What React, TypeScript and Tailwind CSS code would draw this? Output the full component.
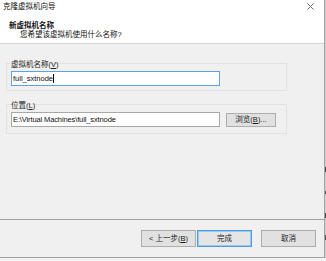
import React from 'react';

const font = "font-['Liberation_Sans','Noto_Sans_CJK_SC',sans-serif]";

const Btn = ({ children, primary }: { children: React.ReactNode; primary?: boolean }) => (
  <div
    className={`w-[55px] h-[17px] flex items-center justify-center text-[7.5px] leading-[9px] text-[#1a1a1a] ${
      primary ? 'bg-[#e5e5e5] border border-[#4d9be2] shadow-[inset_0_0_0_1px_#9cc6ee]' : 'bg-[#e1e1e1] border border-[#adadad]'
    }`}
  >
    {children}
  </div>
);

const App = () => {
  return (
    <div className={`w-[326px] h-[261px] bg-[#f4f4f4] flex overflow-hidden ${font}`}>
      <div className="w-[325px] h-[258px] flex flex-col border-r border-b border-[#a3a3a3] bg-[#f0f0f0]">
        {/* header */}
        <div className="h-[44px] shrink-0 bg-white border-b border-[#d4d4d4] px-[3px] text-[7.5px] text-[#111]">
          <div className="h-[13px] flex items-center justify-between">
            <span className="leading-[13px]">克隆虚拟机向导</span>
            <svg width="7" height="7" viewBox="0 0 7 7" className="mr-[7px]">
              <path d="M0.5 0.5 L6.5 6.5 M6.5 0.5 L0.5 6.5" stroke="#6b6b6b" strokeWidth="1" />
            </svg>
          </div>
          <div className="mt-[7.5px] ml-[6px] font-bold leading-[9px]">新虚拟机名称</div>
          <div className="ml-[17px] leading-[9px]">您希望该虚拟机使用什么名称?</div>
        </div>

        {/* body */}
        <div className="flex-1 px-[6px] pt-[19px] w-[281px] box-content">
          <div className="border border-[#e2e2e2] px-[4px] pb-[4px]">
            <div className="-mt-[4.5px] leading-[9px] text-[7.5px] text-[#222]">
              虚拟机名称(<span className="underline">V</span>)
            </div>
            <div className="mt-[2.5px] w-[209px] h-[15px] bg-white border border-[#5ea2e4] flex items-center pl-[1px] text-[7.5px] text-[#111]">
              full_sxtnode<span className="w-px h-[9px] bg-black" />
            </div>
          </div>

          <div className="mt-[13px] border border-[#e2e2e2] px-[4px] pb-[6px]">
            <div className="-mt-[4.5px] leading-[9px] text-[7.5px] text-[#222]">
              位置(<span className="underline">L</span>)
            </div>
            <div className="mt-[2.5px] flex items-center gap-[6px]">
              <div className="w-[209px] h-[15px] bg-white border border-[#a8a8a8] flex items-center pl-[1px] text-[7.5px] tracking-[-0.12px] text-[#111]">
                E:\Virtual Machines\full_sxtnode
              </div>
              <div className="w-[50px] h-[14px] bg-[#e1e1e1] border border-[#adadad] flex items-center justify-center text-[7.5px] text-[#1a1a1a]">
                浏览(<span className="underline">B</span>)...
              </div>
            </div>
          </div>
        </div>

        {/* footer */}
        <div className="h-[38px] shrink-0 border-t border-[#a0a0a0] flex justify-end items-start pt-[10px] pr-[8px]">
          <Btn>&lt; 上一步(<span className="underline">B</span>)</Btn>
          <div className="ml-px">
            <Btn primary>完成</Btn>
          </div>
          <div className="ml-[9px]">
            <Btn>取消</Btn>
          </div>
        </div>
      </div>

      {/* edge of the window behind */}
      <div className="w-px h-[258px] bg-[#cfcfcf] flex flex-col">
        <div className="h-[167px]" />
        <div className="h-[5px] bg-[#444]" />
        <div className="h-[19px]" />
        <div className="h-[3px] bg-[#555]" />
        <div className="h-[19px]" />
        <div className="h-[5px] bg-[#444]" />
        <div className="h-[17px]" />
        <div className="h-[5px] bg-[#555]" />
      </div>
    </div>
  );
};

export default App;
